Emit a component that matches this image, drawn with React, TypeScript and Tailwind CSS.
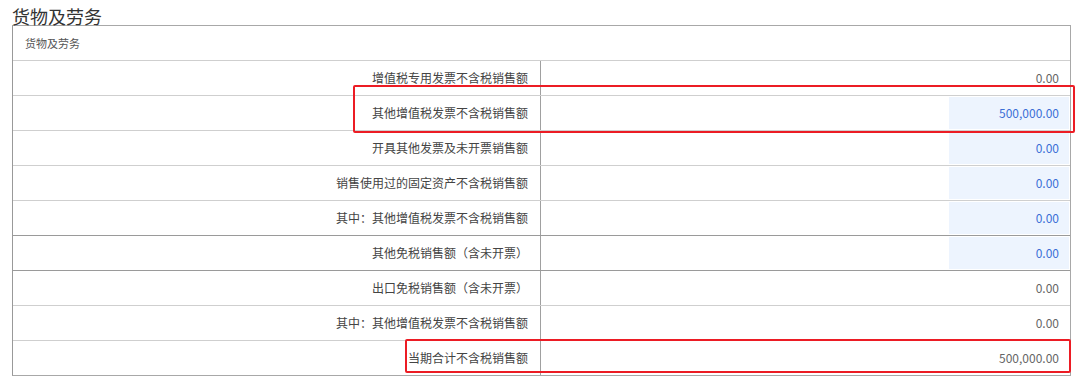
import React from 'react';

type Row = {
  label: string;
  value: string;
  editable?: boolean;
  strong?: boolean;
};

const rows: Row[] = [
  { label: '增值税专用发票不含税销售额', value: '0.00' },
  { label: '其他增值税发票不含税销售额', value: '500,000.00', editable: true },
  { label: '开具其他发票及未开票销售额', value: '0.00', editable: true },
  { label: '销售使用过的固定资产不含税销售额', value: '0.00', editable: true },
  { label: '其中：其他增值税发票不含税销售额', value: '0.00', editable: true },
  { label: '其他免税销售额（含未开票）', value: '0.00', editable: true, strong: true },
  { label: '出口免税销售额（含未开票）', value: '0.00', strong: true },
  { label: '其中：其他增值税发票不含税销售额', value: '0.00' },
  { label: '当期合计不含税销售额', value: '500,000.00' },
];

export default function App() {
  return (
    <div
      className="relative w-[1080px] h-[383px] bg-white overflow-hidden"
      style={{ fontFamily: '"Noto Sans CJK SC", "Noto Sans", sans-serif' }}
    >
      <div className="h-[25px] pl-[12px] text-[18px] leading-[32px] text-[#333]">货物及劳务</div>

      <div className="ml-[12px] w-[1059px] border border-[#a8a8a8] border-l-[#999]">
        <div className="h-[34px] flex items-center px-[12px] text-[11px] text-[#555]">货物及劳务</div>
        {rows.map((row, i) => (
          <div
            key={i}
            className={`flex h-[35px] border-t ${row.strong ? 'border-[#9a9a9a]' : 'border-[#cfcfcf]'}`}
          >
            <div className="w-[528px] shrink-0 flex items-center justify-end pr-[12px] border-r border-[#a0a0a0] text-[12px] text-[#444]">
              {row.label}
            </div>
            <div className="flex-1 flex justify-end py-[1px] pr-[1px]">
              <div
                className={`w-[120px] h-full flex items-center justify-end pr-[10px] text-[12px] ${
                  row.editable ? 'bg-[#edf4fe] text-[#3b6fd6]' : 'text-[#666]'
                }`}
              >
                {row.value}
              </div>
            </div>
          </div>
        ))}
      </div>

      <div className="absolute left-[353px] top-[85px] w-[722px] h-[48px] border-2 border-[#ec1c24] rounded-[2px]" />
      <div className="absolute left-[405px] top-[339px] w-[666px] h-[34px] border-2 border-[#ec1c24] rounded-[2px]" />
    </div>
  );
}
